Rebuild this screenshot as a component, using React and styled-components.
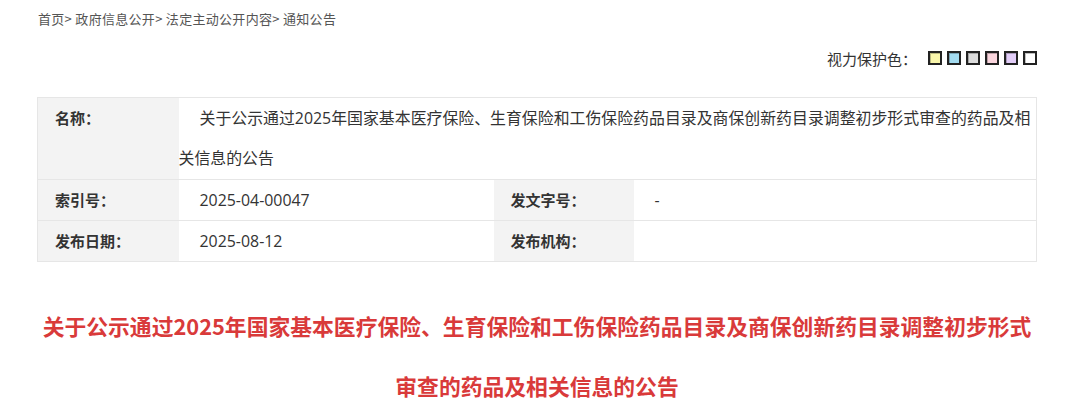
import React from "react";
import styled, { createGlobalStyle } from "styled-components";

const GlobalStyle = createGlobalStyle`
  body {
    margin: 0;
    background: #fff;
    font-family: "Noto Sans CJK SC", "Noto Sans", sans-serif;
    color: #333;
  }
`;

const Page = styled.div`
  width: 1000px;
  padding-left: 37px;
`;

const Crumbs = styled.div`
  padding-top: 10px;
  height: 18px;
  line-height: 18px;
  font-size: 13px;
  letter-spacing: 0.3px;
  color: #555;
  padding-left: 1px;
`;

const ColorBar = styled.div`
  display: flex;
  justify-content: flex-end;
  align-items: center;
  margin-top: 19px;
  height: 22px;
  font-size: 15px;
  color: #333;
`;

const ColorLabel = styled.span`
  margin-right: 6px;
`;

const Swatch = styled.span`
  width: 10px;
  height: 10px;
  margin-left: 5px;
  background: ${(p) => p.$c};
  border: 2px solid #222;
  box-shadow: inset 1px 1px 0 rgba(0, 0, 0, 0.25);
  cursor: pointer;
`;

const Meta = styled.table`
  margin-top: 28px;
  width: 1000px;
  border-collapse: collapse;
  border: 1px solid #e6e6e6;
  table-layout: fixed;
`;

const Row = styled.tr`
  border-bottom: 1px solid #e6e6e6;
`;

const Label = styled.td`
  background: #f3f3f3;
  font-size: 15px;
  font-weight: bold;
  padding: 0 0 0 17px;
  line-height: 40px;
  vertical-align: top;
  color: #333;
`;

const Value = styled.td`
  font-family: "Open Sans", "Noto Sans CJK SC", sans-serif;
  font-size: 15.9px;
  padding: 0 0 ${(p) => (p.$indent ? 1 : 0)}px ${(p) => (p.$indent ? 0 : 21)}px;
  text-indent: ${(p) => (p.$indent ? 21 : 0)}px;
  line-height: 40px;
  vertical-align: top;
  color: #333;
`;

const Title = styled.h1`
  margin: 34px 0 0;
  font-size: 21.8px;
  line-height: 60px;
  font-weight: bold;
  color: #d93a3a;
  text-align: center;
`;

const swatches = ["#f9f6ab", "#a3dbf0", "#dcdcdc", "#fad5dd", "#e2cdf8", "#ffffff"];

const fullTitle =
  "关于公示通过2025年国家基本医疗保险、生育保险和工伤保险药品目录及商保创新药目录调整初步形式审查的药品及相关信息的公告";

export default function App() {
  return (
    <>
      <GlobalStyle />
      <Page>
        <Crumbs>首页&gt; 政府信息公开&gt; 法定主动公开内容&gt; 通知公告</Crumbs>

        <ColorBar>
          <ColorLabel>视力保护色：</ColorLabel>
          {swatches.map((c) => (
            <Swatch key={c} $c={c} />
          ))}
        </ColorBar>

        <Meta>
          <colgroup>
            <col style={{ width: 141 }} />
            <col style={{ width: 315 }} />
            <col style={{ width: 140 }} />
            <col />
          </colgroup>
          <tbody>
            <Row>
              <Label>名称：</Label>
              <Value colSpan={3} $indent>
                {fullTitle}
              </Value>
            </Row>
            <Row>
              <Label>索引号：</Label>
              <Value>2025-04-00047</Value>
              <Label>发文字号：</Label>
              <Value>-</Value>
            </Row>
            <Row>
              <Label>发布日期：</Label>
              <Value>2025-08-12</Value>
              <Label>发布机构：</Label>
              <Value></Value>
            </Row>
          </tbody>
        </Meta>

        <Title>{fullTitle}</Title>
      </Page>
    </>
  );
}
